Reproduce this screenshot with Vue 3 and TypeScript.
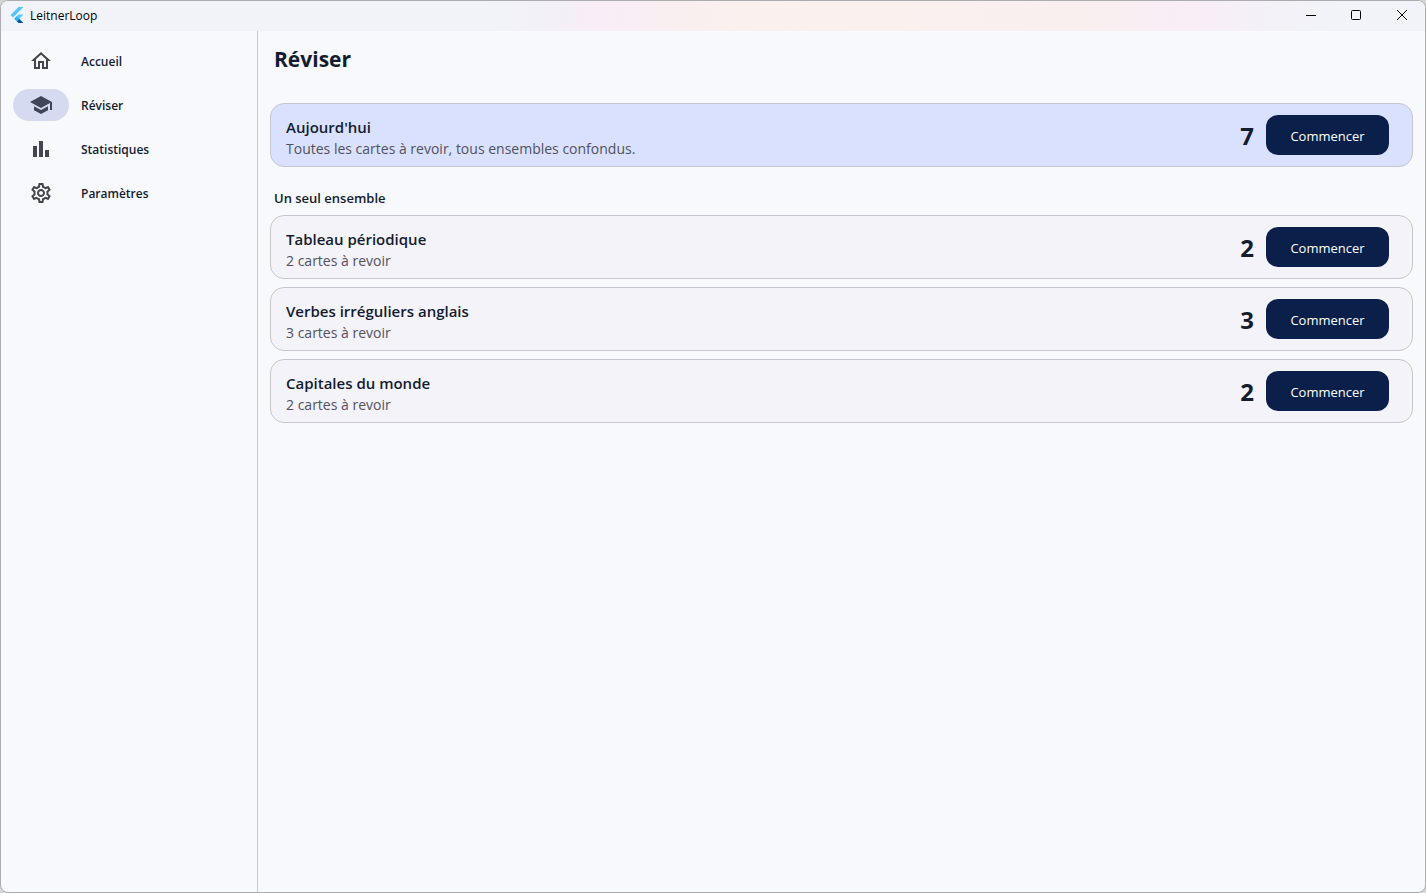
<script setup lang="ts">
import { ref } from 'vue'

interface NavItem {
  label: string
  path: string
}

interface Deck {
  name: string
  due: number
}

const navItems: NavItem[] = [
  { label: 'Accueil', path: 'M12 5.69l5 4.5V18h-2v-6H9v6H7v-7.81l5-4.5M12 3L2 12h3v8h6v-6h2v6h6v-8h3L12 3z' },
  { label: 'Réviser', path: 'M5 13.18v4L12 21l7-3.82v-4L12 17l-7-3.82zM12 3L1 9l11 6 9-4.91V17h2V9L12 3z' },
  { label: 'Statistiques', path: 'M4 9h4v11H4zM16 13h4v7h-4zM10 4h4v16h-4z' },
  {
    label: 'Paramètres',
    path: 'M19.43 12.98c.04-.32.07-.64.07-.98s-.03-.66-.07-.98l2.11-1.65c.19-.15.24-.42.12-.64l-2-3.46c-.09-.16-.26-.25-.44-.25-.06 0-.12.01-.17.03l-2.49 1c-.52-.4-1.08-.73-1.69-.98l-.38-2.65C14.46 2.18 14.25 2 14 2h-4c-.25 0-.46.18-.49.42l-.38 2.65c-.61.25-1.17.59-1.69.98l-2.49-1c-.06-.02-.12-.03-.18-.03-.17 0-.34.09-.43.25l-2 3.46c-.13.22-.07.49.12.64l2.11 1.65c-.04.32-.07.65-.07.98s.03.66.07.98l-2.11 1.65c-.19.15-.24.42-.12.64l2 3.46c.09.16.26.25.44.25.06 0 .12-.01.17-.03l2.49-1c.52.4 1.08.73 1.69.98l.38 2.65c.03.24.24.42.49.42h4c.25 0 .46-.18.49-.42l.38-2.65c.61-.25 1.17-.59 1.69-.98l2.49 1c.06.02.12.03.18.03.17 0 .34-.09.43-.25l2-3.46c.12-.22.07-.49-.12-.64l-2.11-1.65zm-1.98-1.71c.04.31.05.52.05.73 0 .21-.02.43-.05.73l-.14 1.13.89.7 1.08.84-.7 1.21-1.27-.51-1.04-.42-.9.68c-.43.32-.84.56-1.25.73l-1.06.43-.16 1.13-.2 1.35h-1.4l-.19-1.35-.16-1.13-1.06-.43c-.43-.18-.83-.41-1.23-.71l-.91-.7-1.06.43-1.27.51-.7-1.21 1.08-.84.89-.7-.14-1.13c-.03-.31-.05-.54-.05-.74s.02-.43.05-.73l.14-1.13-.89-.7-1.08-.84.7-1.21 1.27.51 1.04.42.9-.68c.43-.32.84-.56 1.25-.73l1.06-.43.16-1.13.2-1.35h1.39l.19 1.35.16 1.13 1.06.43c.43.18.83.41 1.23.71l.91.7 1.06-.43 1.27-.51.7 1.21-1.07.85-.89.7.14 1.13zM12 8c-2.21 0-4 1.79-4 4s1.79 4 4 4 4-1.79 4-4-1.79-4-4-4zm0 6c-1.1 0-2-.9-2-2s.9-2 2-2 2 .9 2 2-.9 2-2 2z',
  },
]

const decks: Deck[] = [
  { name: 'Tableau périodique', due: 2 },
  { name: 'Verbes irréguliers anglais', due: 3 },
  { name: 'Capitales du monde', due: 2 },
]

const total = decks.reduce((sum, deck) => sum + deck.due, 0)
const active = ref('Réviser')
</script>

<template>
  <div class="window">
    <header class="titlebar">
      <svg class="logo" viewBox="0 0 24 24" aria-hidden="true">
        <path fill="#54c5f8" d="M14.3 0L2.3 12l3.7 3.7L21.7 0z" />
        <path fill="#54c5f8" d="M14.3 11.1L7.9 17.5l3.7 3.6 3.7-3.6 6.4-6.4z" />
        <path fill="#01579b" d="M11.6 21.2l2.7 2.8h7.4l-6.4-6.5z" />
        <path fill="#29b6f6" d="M7.9 17.5l3.7-3.7 3.7 3.7-3.7 3.7z" />
      </svg>
      <span class="app-name">LeitnerLoop</span>
      <div class="controls">
        <button type="button" aria-label="Réduire">
          <svg viewBox="0 0 12 12"><path d="M2 6.5h10" /></svg>
        </button>
        <button type="button" aria-label="Agrandir">
          <svg viewBox="0 0 12 12"><rect x="1.5" y="1.5" width="9" height="9" rx="1" /></svg>
        </button>
        <button type="button" aria-label="Fermer">
          <svg viewBox="0 0 12 12"><path d="M1 1l10 10M11 1L1 11" /></svg>
        </button>
      </div>
    </header>

    <div class="body">
      <nav class="rail">
        <button
          v-for="item in navItems"
          :key="item.label"
          type="button"
          class="nav-item"
          :class="{ active: item.label === active }"
          @click="active = item.label"
        >
          <span class="indicator">
            <svg viewBox="0 0 24 24" aria-hidden="true"><path :d="item.path" /></svg>
          </span>
          <span class="nav-label">{{ item.label }}</span>
        </button>
      </nav>

      <main class="content">
        <h1>Réviser</h1>
        <section class="card today">
          <div class="info">
            <h3>Aujourd'hui</h3>
            <p>Toutes les cartes à revoir, tous ensembles confondus.</p>
          </div>
          <strong class="count">{{ total }}</strong>
          <button type="button" class="start">Commencer</button>
        </section>

        <h2>Un seul ensemble</h2>
        <div class="decks">
          <section v-for="deck in decks" :key="deck.name" class="card">
            <div class="info">
              <h3>{{ deck.name }}</h3>
              <p>{{ deck.due }} cartes à revoir</p>
            </div>
            <strong class="count">{{ deck.due }}</strong>
            <button type="button" class="start">Commencer</button>
          </section>
        </div>
      </main>
    </div>
  </div>
</template>

<style>
body {
  background: #d6d6d6;
}
</style>

<style scoped>
* {
  box-sizing: border-box;
  margin: 0;
}

.window {
  display: flex;
  flex-direction: column;
  min-height: 100vh;
  border: 1px solid #acacae;
  border-radius: 8px;
  overflow: hidden;
  background: #f7f9fc;
  color: #141c2f;
  font-family: "Open Sans", "Noto Sans", sans-serif;
}

button {
  border: 0;
  background: none;
  font-family: inherit;
  color: inherit;
  padding: 0;
}

.titlebar {
  display: flex;
  align-items: center;
  height: 30px;
  padding: 0 0 2px 8px;
  background: linear-gradient(90deg, #f1f3f8 34%, #f3f0f7 39%, #f9edf7 42%, #f9efef 48%, #faf0ed 54%, #f9efef 76%, #f9edf7 84%, #f3f1f7 88%, #f1f3f8 94%);
}

.logo {
  width: 16px;
  height: 16px;
}

.app-name {
  margin-left: 5px;
  padding-top: 2px;
  font-size: 12px;
  line-height: 16px;
  color: #000;
}

.controls {
  display: flex;
  margin-left: auto;
}

.controls button {
  display: grid;
  place-items: center;
  width: 46px;
  height: 28px;
}

.controls svg {
  width: 12px;
  height: 12px;
  fill: none;
  stroke: #000;
}

.body {
  display: flex;
  flex: 1;
}

.rail {
  display: flex;
  flex-direction: column;
  gap: 12px;
  width: 257px;
  padding: 14px 12px;
  border-right: 1px solid #c6c8ce;
}

.nav-item {
  display: flex;
  align-items: center;
  gap: 12px;
  font-size: 12px;
  font-weight: 600;
  line-height: 16px;
}

.nav-label {
  padding-top: 2px;
}

.indicator {
  display: grid;
  place-items: center;
  width: 56px;
  height: 32px;
  border-radius: 16px;
}

.active .indicator {
  background: #d5daf1;
}

.indicator svg {
  width: 24px;
  height: 24px;
  fill: #44464f;
}

.active svg {
  fill: #404659;
}

.content {
  flex: 1;
  padding: 10px 12px;
}

h1 {
  padding: 0 4px;
  font-size: 21px;
  font-weight: 700;
  line-height: 36px;
}

h2 {
  padding: 20px 4px 6px;
  font-size: 13px;
  font-weight: 600;
  line-height: 22px;
}

.card {
  display: flex;
  align-items: center;
  gap: 12px;
  min-height: 64px;
  padding: 0 23px 0 15px;
  border: 1px solid #c5c6d0;
  border-radius: 14px;
  background: #f4f3fa;
}

.today {
  margin-top: 26px;
  background: #dae1ff;
}

.decks {
  display: flex;
  flex-direction: column;
  gap: 8px;
}

.info {
  flex: 1;
  padding-top: 4px;
}

h3 {
  font-size: 15px;
  font-weight: 600;
  line-height: 24px;
}

p {
  font-size: 14px;
  line-height: 20px;
  color: #50525c;
}

.count {
  padding-top: 2px;
  font-size: 24px;
  font-weight: 700;
  line-height: 32px;
}

.start {
  min-width: 123px;
  height: 40px;
  padding: 2px 20px 0;
  border-radius: 12px;
  background: #0a1f49;
  color: #fff;
  font-size: 13px;
  line-height: 20px;
}
</style>
